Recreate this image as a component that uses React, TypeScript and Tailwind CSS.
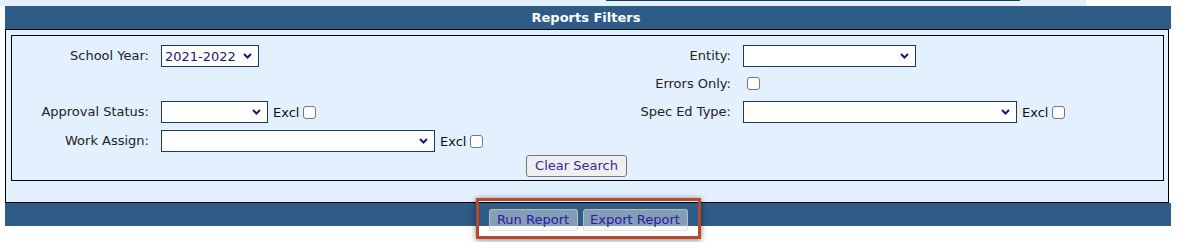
import React from "react";

const font = { fontFamily: '"DejaVu Sans", Verdana, sans-serif' };

function Chevron() {
    return (
        <svg width="9" height="6" viewBox="0 0 9 6" className="shrink-0">
            <path d="M1 1 L4.5 4.5 L8 1" fill="none" stroke="#1a1a6e" strokeWidth="2" />
        </svg>
    );
}

function Select({ width, value }: { width: string; value?: string }) {
    return (
        <div className={`${width} h-[22px] bg-white border border-[#1c3a60] flex items-center justify-between pl-[3px] pr-[6px]`}>
            <span className="text-[13px] text-[#1a1a6e] pt-[2px]">{value ?? ""}</span>
            <Chevron />
        </div>
    );
}

function Checkbox() {
    return <span className="inline-block w-[13px] h-[13px] bg-white border border-[#767676] rounded-[3px] ml-[4px]" />;
}

function Excl() {
    return (
        <div className="flex items-center ml-[5px] pt-[2px]">
            <span className="text-[13px] text-[#111]">Excl</span>
            <Checkbox />
        </div>
    );
}

function Label({ children }: { children: React.ReactNode }) {
    return <div className="text-right text-[13px] text-[#222]">{children}</div>;
}

export default function App() {
    return (
        <div className="relative w-[1180px] h-[242px] bg-white" style={font}>
            {/* strip left over from the panel above */}
            <div className="w-[1086px] h-[6px] bg-[#e3f0fd]">
                <div className="ml-[606px] w-[414px] h-px bg-[#1c3a60]" />
            </div>

            <div className="ml-[5px] w-[1166px] h-[23px] bg-[#2f5b87] flex items-center justify-center">
                <span className="text-white font-bold text-[13px] ml-[-4px]">Reports Filters</span>
            </div>

            <div className="ml-[5px] w-[1164px] h-[174px] border border-black bg-[#e3f0fd] pt-[5px] pl-[5px] pr-[4px] pb-[21px]">
                <div className="h-full border border-black pt-[6px] pb-[2px]">
                    <div className="grid grid-cols-[137px_427px_131px_1fr] gap-x-[12px]">
                        {/* row 1 */}
                        <div className="h-[28px] flex items-center justify-end"><Label>School Year:</Label></div>
                        <div className="h-[28px] flex items-center"><Select width="w-[98px]" value="2021-2022" /></div>
                        <div className="h-[28px] flex items-center justify-end"><Label>Entity:</Label></div>
                        <div className="h-[28px] flex items-center"><Select width="w-[173px]" /></div>

                        {/* row 2 */}
                        <div className="h-[27px]" />
                        <div className="h-[27px]" />
                        <div className="h-[27px] flex items-center justify-end"><Label>Errors Only:</Label></div>
                        <div className="h-[27px] flex items-center"><Checkbox /></div>

                        {/* row 3 */}
                        <div className="h-[29px] flex items-center justify-end"><Label>Approval Status:</Label></div>
                        <div className="h-[29px] flex items-center"><Select width="w-[107px]" /><Excl /></div>
                        <div className="h-[29px] flex items-center justify-end"><Label>Spec Ed Type:</Label></div>
                        <div className="h-[29px] flex items-center"><Select width="w-[274px]" /><Excl /></div>

                        {/* row 4 */}
                        <div className="h-[29px] flex items-center justify-end"><Label>Work Assign:</Label></div>
                        <div className="h-[29px] flex items-center"><Select width="w-[274px]" /><Excl /></div>
                        <div className="h-[29px]" />
                        <div className="h-[29px]" />
                    </div>
                    <div className="flex justify-center pr-[22px]">
                        <button className="h-[22px] w-[101px] bg-[#efefef] border border-[#767676] rounded-[3px] text-[13px] text-[#3b1f9c]">
                            Clear Search
                        </button>
                    </div>
                </div>
            </div>

            <div className="ml-[5px] w-[1166px] h-[23px] bg-[#2f5b87] flex justify-center items-start gap-[5px] pt-[6px]">
                <button className="shrink-0 h-[22px] w-[89px] bg-[#efefef]/45 border border-[#d0d0d0]/60 rounded-[3px] text-[13px] text-[#2420a4]">
                    Run Report
                </button>
                <button className="shrink-0 h-[22px] w-[105px] bg-[#efefef]/45 border border-[#d0d0d0]/60 rounded-[3px] text-[13px] text-[#2420a4]">
                    Export Report
                </button>
            </div>

            {/* annotation highlight */}
            <div className="absolute left-[476px] top-[198px] w-[225px] h-[41px] border-[3px] border-[#b8492d] shadow-[0_1px_6px_rgba(0,0,0,0.5)]" />
        </div>
    );
}
